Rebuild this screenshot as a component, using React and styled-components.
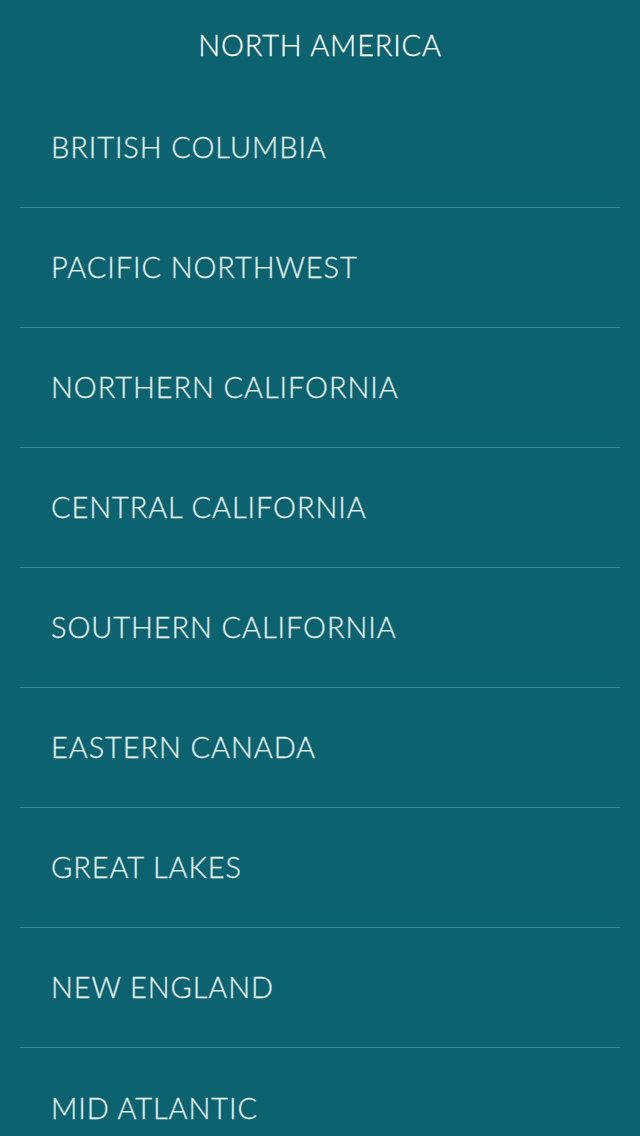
import React from "react";
import styled, { createGlobalStyle } from "styled-components";

const regions = [
  "British Columbia",
  "Pacific Northwest",
  "Northern California",
  "Central California",
  "Southern California",
  "Eastern Canada",
  "Great Lakes",
  "New England",
  "Mid Atlantic",
];

const GlobalStyle = createGlobalStyle`
  html, body {
    margin: 0;
    padding: 0;
    background: #0d6270;
  }
  body {
    font-family: Lato, "Noto Sans", sans-serif;
  }
`;

const Screen = styled.div`
  width: 640px;
  height: 1136px;
  overflow: hidden;
  background: #0d6270;
`;

const Header = styled.header`
  height: 88px;
  display: flex;
  align-items: center;
  justify-content: center;
  box-sizing: border-box;
  color: #ffffff;
  font-size: 29px;
  font-weight: 300;
  letter-spacing: 0.8px;
  text-transform: uppercase;
  -webkit-text-stroke: 0.3px #ffffff;
`;

const List = styled.ul`
  list-style: none;
  margin: 0;
  padding: 0 20px;
`;

const Row = styled.li`
  height: 120px;
  display: flex;
  align-items: center;
  padding: 0 0 2px 31px;
  border-bottom: ${(p) => (p.$last ? "none" : "1px solid #3d8791")};
  box-sizing: border-box;
  color: #e2f1f1;
  font-size: 29px;
  font-weight: 300;
  letter-spacing: 0.9px;
  text-transform: uppercase;
  -webkit-text-stroke: 0.3px #e2f1f1;
`;

const App = () => {
  return (
    <Screen>
      <GlobalStyle />
      <Header>North America</Header>
      <List>
        {regions.map((r, index) => (
          <Row key={index} $last={index === regions.length - 1}>
            {r}
          </Row>
        ))}
      </List>
    </Screen>
  );
};

export default App;
